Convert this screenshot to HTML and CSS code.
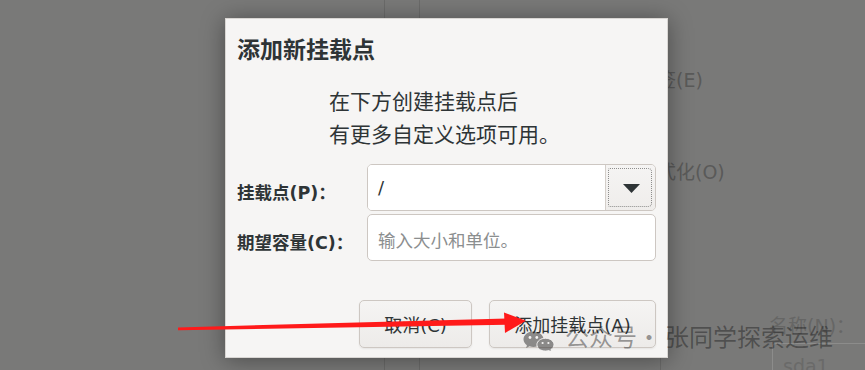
FILE: index.html
```html
<!DOCTYPE html>
<html lang="zh-CN">
<head>
<meta charset="utf-8">
<title>添加新挂载点</title>
<link rel="stylesheet" href="styles.css">
</head>
<body>
<div class="screen">
  <div class="app">
    <div class="col col-side"></div>
    <div class="col col-mid"></div>
    <div class="col col-main">
      <div class="bg-fields">
        <div class="bg-row">标签(E)</div>
        <div class="bg-row bg-row-2">格式化(O)</div>
      </div>
      <div class="bg-details">
        <div class="bg-name">名称(N)：</div>
        <div class="bg-entry">sda1</div>
      </div>
    </div>
  </div>

  <div class="dialog">
    <h1 class="dlg-title">添加新挂载点</h1>
    <p class="dlg-desc">在下方创建挂载点后<br>有更多自定义选项可用。</p>
    <div class="form">
      <label class="form-label">挂载点(P)：</label>
      <div class="combo">
        <div class="combo-entry">/</div>
        <div class="combo-btn">
          <span class="focus">
            <svg class="caret" width="17" height="9" viewBox="0 0 17 9"><path d="M0 0H17L8.5 9Z" fill="#2e3436"/></svg>
          </span>
        </div>
      </div>
      <label class="form-label">期望容量(C)：</label>
      <div class="entry"><span class="placeholder">输入大小和单位。</span></div>
    </div>
    <div class="actions">
      <button class="btn btn-cancel">取消(C)</button>
      <button class="btn btn-add">添加挂载点(A)</button>
    </div>
  </div>

  <svg class="arrow" width="865" height="370" viewBox="0 0 865 370">
    <polygon points="178,327.4 178,330.2 507,324.8 507,318.4" fill="#ff1a1a"/>
    <polygon points="504,312.5 526,320.8 505,333" fill="#ff1a1a"/>
  </svg>

  <div class="watermark">
    <svg class="wx" width="32" height="20" viewBox="0 0 32 20">
      <g opacity="0.45">
        <path d="M10.5 0.5C4.9 0.5 0.5 4 0.5 8.3c0 2.4 1.3 4.5 3.4 5.9L3.2 17l3.3-1.7c1.2 0.4 2.5 0.6 4 0.6 5.600 0 10-3.5 10-7.6S16.1 0.5 10.5 0.5Z" fill="#141414"/>
        <circle cx="7" cy="6.5" r="1.4" fill="#fff"/>
        <circle cx="13.8" cy="6.5" r="1.4" fill="#fff"/>
        <path d="M22.5 7.2c-4.8 0-8.6 3-8.6 6.5s3.8 6.4 8.6 6.4c1.1 0 2.2-0.2 3.2-0.5l2.8 1.4-0.6-2.4c1.9-1.2 3.1-3 3.1-4.900 0-3.5-3.8-6.5-8.5-6.5Z" fill="#141414" stroke="#fff" stroke-width="1"/>
        <circle cx="19.6" cy="12" r="1.1" fill="#fff"/>
        <circle cx="25.4" cy="12" r="1.1" fill="#fff"/>
      </g>
    </svg>
    <span class="wm-text">公众号</span>
    <span class="wm-text wm-dot">·</span>
    <span class="wm-text">张同学探索运维</span>
  </div>
</div>
</body>
</html>
```

FILE: styles.css
```css
* { box-sizing: border-box; }

html, body {
  margin: 0;
  padding: 0;
  width: 865px;
  height: 370px;
  overflow: hidden;
  background: #797978;
}

.screen {
  position: relative;
  width: 865px;
  height: 370px;
  font-family: "DejaVu Sans", "Noto Sans CJK SC", sans-serif;
  color: #2e3436;
}

/* dimmed application behind the dialog */
.app {
  display: grid;
  grid-template-columns: 385px 35px 1fr;
  width: 865px;
  height: 370px;
  background: #797978;
}

.col-side { border-right: 1px solid #6b6b6a; }
.col-mid { border-right: 1px solid #6b6b6a; }

.col-main {
  display: flex;
  flex-direction: column;
  color: #5a5a59;
  font-size: 19px;
}

.bg-fields {
  padding: 66px 0 0 218px;
  display: flex;
  flex-direction: column;
  gap: 64px;
}

.bg-row { line-height: 28px; }

.bg-details {
  margin: auto 0 0 240px;
  height: 70px;
  border-left: 1px solid #6b6b6a;
  padding: 12px 0 0 108px;
  color: #666665;
}

.bg-name { line-height: 28px; }

.bg-entry {
  margin: 3px 0 0 3px;
  height: 40px;
  border: 1px solid #8c8c8b;
  border-right: 0;
  border-radius: 4px 0 0 0;
  padding: 10px 0 0 10px;
  color: #6a6a69;
  line-height: 24px;
}

/* dialog window */
.dialog {
  position: absolute;
  left: 225px;
  top: 18px;
  width: 443px;
  height: 340px;
  background: #f6f5f4;
  border: 1px solid #d9d6d3;
  box-shadow: 0 2px 22px rgba(0, 0, 0, 0.38);
  padding: 14px 11px 9px;
  display: flex;
  flex-direction: column;
}

.dlg-title {
  margin: 0;
  font-family: "Noto Sans CJK SC", sans-serif;
  font-size: 23px;
  font-weight: 700;
  line-height: 30px;
}

.dlg-desc {
  margin: 21px 0 0 92px;
  font-family: "Noto Sans CJK SC", sans-serif;
  font-size: 21px;
  line-height: 33px;
}

.form {
  margin-top: 14px;
  display: grid;
  grid-template-columns: 116px 1fr;
  grid-auto-rows: 47px;
  column-gap: 14px;
  row-gap: 3px;
}

.form-label {
  align-self: center;
  padding-top: 10px;
  font-size: 17.5px;
  font-weight: 700;
  white-space: nowrap;
  line-height: 24px;
}

.combo {
  display: flex;
  border: 1px solid #cdc7c2;
  border-radius: 5px;
  overflow: hidden;
}

.combo-entry {
  flex: 1;
  background: #ffffff;
  padding-left: 10px;
  font-size: 18px;
  line-height: 45px;
}

.combo-btn {
  width: 50px;
  border-left: 1px solid #d3cec9;
  background: linear-gradient(#f5f4f3, #efedeb);
  padding: 3px 3px 3px 2px;
  display: flex;
}

.focus {
  flex: 1;
  border: 1px dotted #8e8e8d;
  border-radius: 2px 4px 4px 2px;
  display: flex;
  align-items: center;
  justify-content: center;
}

.caret { display: block; margin: 1px 0 0 2px; }

.entry {
  border: 1px solid #cdc7c2;
  border-radius: 5px;
  background: #ffffff;
  padding-left: 10px;
  display: flex;
  align-items: center;
}

.placeholder {
  font-family: "Noto Sans CJK SC", sans-serif;
  font-size: 17.5px;
  color: #8b8e8f;
  padding-top: 3px;
}

.actions {
  margin-top: auto;
  display: flex;
  justify-content: flex-end;
  gap: 17px;
}

.btn {
  height: 48px;
  border: 1px solid #cdc7c2;
  border-radius: 5px;
  background: linear-gradient(#f5f4f3, #edebe9);
  box-shadow: 0 1px 2px rgba(0, 0, 0, 0.07);
  font-family: "DejaVu Sans", "Noto Sans CJK SC", sans-serif;
  font-size: 18px;
  color: #2e3436;
  padding: 0;
}

.btn-cancel { width: 113px; }
.btn-add { width: 167px; }

/* overlays */
.arrow {
  position: absolute;
  left: 0;
  top: 0;
  pointer-events: none;
}

.watermark {
  position: absolute;
  left: 523px;
  top: 321px;
  display: flex;
  align-items: center;
  pointer-events: none;
}

.wx { display: block; margin: 9px 10px 0 0; }

.wm-text {
  font-family: "Noto Sans CJK SC", sans-serif;
  font-size: 24px;
  line-height: 30px;
  color: rgba(20, 20, 20, 0.42);
  white-space: nowrap;
}

.wm-dot {
  width: 28px;
  text-align: center;
  padding-right: 6px;
}
```
